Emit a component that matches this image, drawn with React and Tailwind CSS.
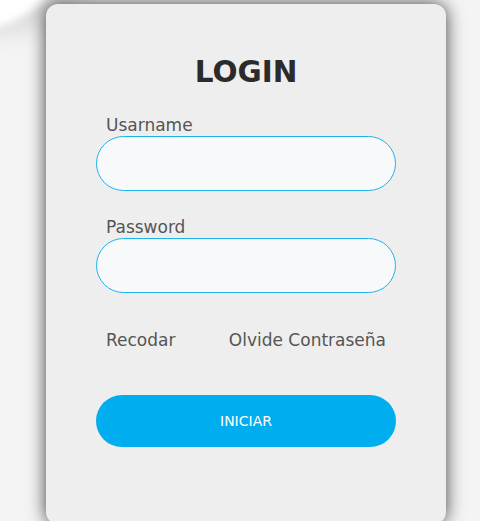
import React from "react";

const font = { fontFamily: '"DejaVu Sans", Verdana, sans-serif' };

const Field = ({ label, type }) => (
  <div className="flex flex-col">
    <label className="pl-[10px] text-[17px] leading-[20px] text-[#555]">{label}</label>
    <input
      type={type}
      className="mt-[1px] h-[55px] w-full rounded-full border border-[#1fb3ec] bg-[#f8f9fb] px-5 outline-none"
    />
  </div>
);

const App = () => {
  return (
    <div className="relative min-h-[521px] overflow-hidden bg-[#f4f4f4]" style={font}>
      {/* blurred circle in the corner */}
      <div className="absolute -left-[120px] -top-[170px] h-[200px] w-[220px] rounded-full bg-[#d4d4d4] blur-[12px]"></div>
      <div className="absolute -left-[130px] -top-[160px] h-[190px] w-[200px] rounded-full bg-white blur-[4px]"></div>

      <div className="relative ml-[46px] mt-[4px] flex h-[520px] w-[400px] flex-col rounded-[12px] bg-[#eeeeee] px-[50px] shadow-[0_0_18px_rgba(0,0,0,0.75)]">
        <h1 className="mt-[51px] text-center text-[29.5px] font-bold leading-[34px] text-[#2b2b2b]">LOGIN</h1>

        <div className="mt-[26px] flex flex-col gap-[26px]">
          <Field label="Usarname" type="text" />
          <Field label="Password" type="password" />
        </div>

        <div className="mt-[37px] flex justify-between px-[10px] text-[17px] leading-[20px] text-[#555]">
          <span>Recodar</span>
          <span>Olvide Contraseña</span>
        </div>

        <button className="mt-[45px] h-[52px] w-full rounded-full bg-[#00aeef] text-[14px] text-white">
          INICIAR
        </button>
      </div>
    </div>
  );
};

export default App;
